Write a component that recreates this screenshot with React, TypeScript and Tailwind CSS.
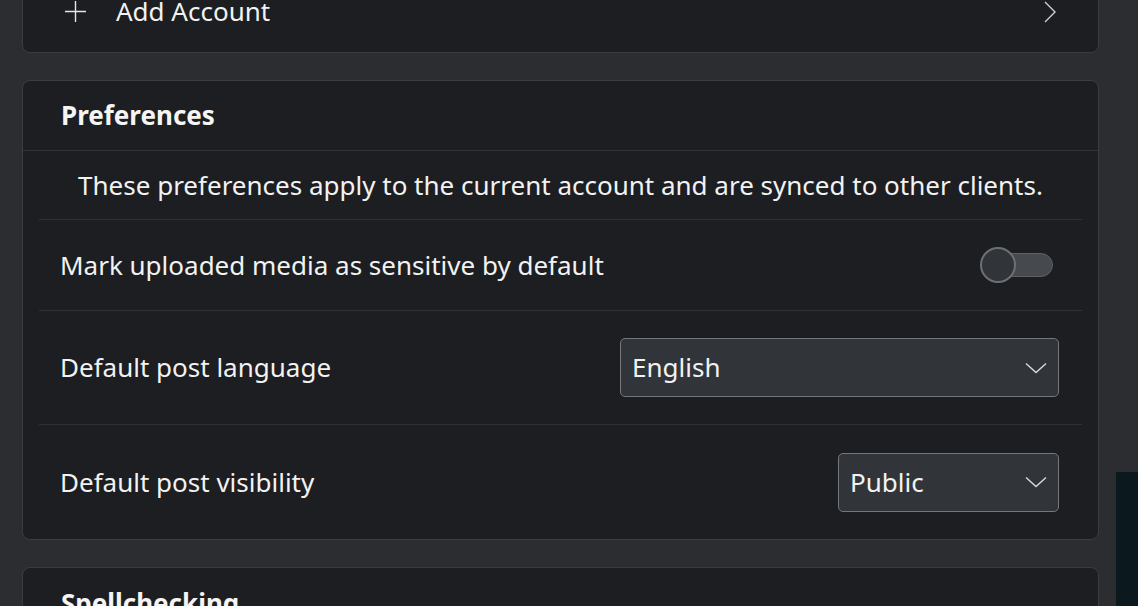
import { ReactNode } from 'react';

const font = { fontFamily: '"Noto Sans", "Open Sans", sans-serif' };

function Card({ children, className = '' }: { children: ReactNode; className?: string }) {
  return (
    <div className={`rounded-[8px] border border-[#3a3c41] bg-[#1c1e21] ${className}`}>{children}</div>
  );
}

function Chevron() {
  return (
    <svg width="22" height="12" viewBox="0 0 22 12" fill="none" stroke="#d8d9da" strokeWidth="1.4">
      <path d="M1 1.5 L11 10.5 L21 1.5" />
    </svg>
  );
}

function Select({ value, width }: { value: string; width: string }) {
  return (
    <div className={`flex h-[59px] ${width} items-center justify-between rounded-[5px] border-[1.5px] border-[#74777b] bg-[#31353a] pl-[11px] pr-[11px]`}>
      <span className="text-[26px] text-[#f2f2f2]">{value}</span>
      <Chevron />
    </div>
  );
}

function Toggle() {
  return (
    <div className="relative h-[36px] w-[73px]">
      <div className="absolute left-[2px] top-[6px] h-[24px] w-[71px] rounded-full border-[1.5px] border-[#5d6064] bg-[#46494e]" />
      <div className="absolute left-0 top-0 h-[36px] w-[36px] rounded-full border-[2px] border-[#6c6f73] bg-[#31353a]" />
    </div>
  );
}

function Row({ label, children, last = false, h }: { label: string; children: ReactNode; last?: boolean; h: string }) {
  return (
    <div className={`mx-[16px] flex ${h} items-center justify-between pl-[21px] pr-[23px] ${last ? '' : 'border-b-[1.5px] border-[#2f3135]'}`}>
      <span className="text-[26px] text-[#f2f2f2]">{label}</span>
      {children}
    </div>
  );
}

export default function App() {
  return (
    <div className="flex h-[606px] w-[1138px] overflow-hidden bg-[#2b2d31]" style={font}>
      <div className="flex w-[1116px] flex-col gap-[27px] pl-[22px] pr-[17px]">
        <Card className="-mt-[30px] flex h-[83px] shrink-0 items-center justify-between pl-[41px] pr-[42px]">
          <div className="flex items-center gap-[29px]">
            <svg width="23" height="23" viewBox="0 0 23 23" stroke="#e6e6e6" strokeWidth="1.4">
              <path d="M11.5 1 V22 M1 11.5 H22" />
            </svg>
            <span className="text-[26px] text-[#f2f2f2]">Add Account</span>
          </div>
          <svg width="12" height="22" viewBox="0 0 12 22" fill="none" stroke="#cfd0d1" strokeWidth="1.4">
            <path d="M1 1 L11 11 L1 21" />
          </svg>
        </Card>

        <Card className="shrink-0">
          <div className="flex h-[70px] items-center border-b-[1.5px] border-[#303236] px-[38px]">
            <span className="text-[26px] font-bold text-[#f5f5f5]">Preferences</span>
          </div>
          <div className="mx-[16px] flex h-[69px] items-center justify-center border-b-[1.5px] border-[#2f3135]">
            <span className="text-[26px] text-[#f2f2f2]">
              These preferences apply to the current account and are synced to other clients.
            </span>
          </div>
          <Row label="Mark uploaded media as sensitive by default" h="h-[91px]">
            <div className="mr-[6px]">
              <Toggle />
            </div>
          </Row>
          <Row label="Default post language" h="h-[114px]">
            <Select value="English" width="w-[439px]" />
          </Row>
          <Row label="Default post visibility" h="h-[114px]" last>
            <Select value="Public" width="w-[221px]" />
          </Row>
        </Card>

        <Card className="h-[80px] shrink-0 px-[38px] pt-[16px]">
          <span className="text-[26px] font-bold text-[#f5f5f5]">Spellchecking</span>
        </Card>
      </div>
      <div className="flex w-[22px] flex-col">
        <div className="h-[472px] shrink-0" />
        <div className="flex-1 bg-[#0b181d]" />
      </div>
    </div>
  );
}
